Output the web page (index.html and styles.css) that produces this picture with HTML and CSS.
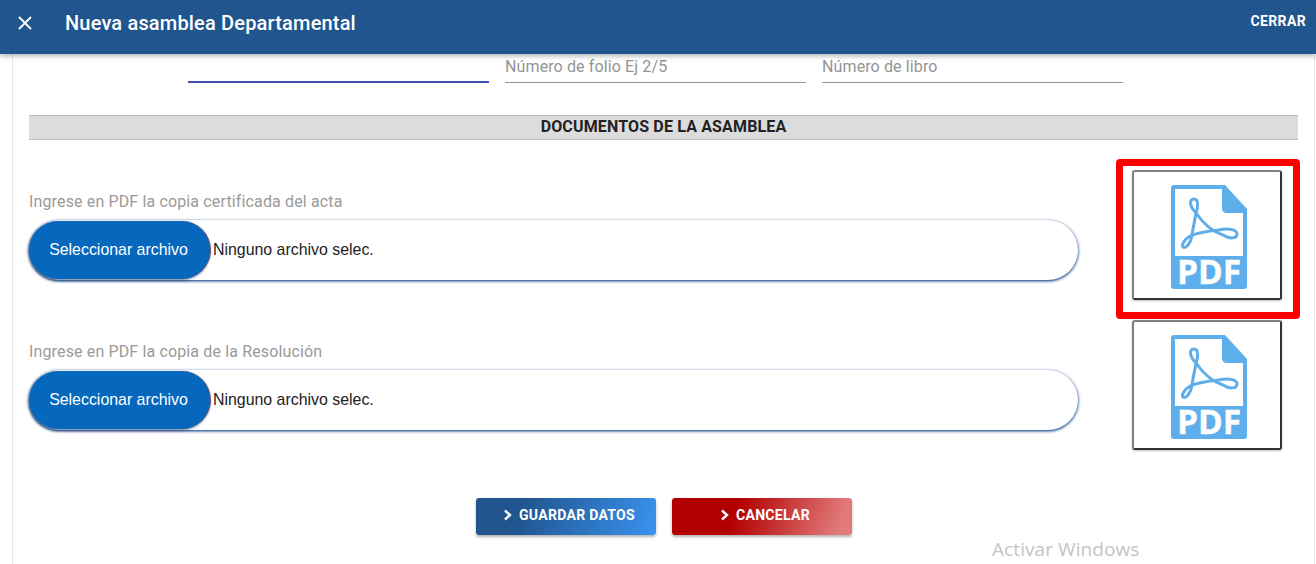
FILE: index.html
```html
<!DOCTYPE html>
<html lang="es">
<head>
<meta charset="utf-8">
<title>Nueva asamblea Departamental</title>
<link rel="stylesheet" href="styles.css">
</head>
<body>
<svg class="sprite" width="0" height="0" aria-hidden="true">
  <symbol id="pdf" viewBox="0 0 76 104">
    <path class="pdf-body" d="M3 0H54L76 24V101Q76 104 73 104H3Q0 104 0 101V3Q0 0 3 0Z"/>
    <path class="pdf-page" d="M4 4H51V23Q51 28 56 28H72V71H4Z"/>
    <path class="pdf-swoosh" d="M25 28C27 23 28 14 23 14C18 14 18 21 25 28C32 38 42 47 52 50C58 54 66 54 66 49C66 44 56 43 48 45C38 46 28 47 19 51C14 54 10 60 12 62C15 64 20 58 21 50C22 42 24 35 25 28Z"/>
  </symbol>
</svg>
<header class="bar">
  <svg class="close" viewBox="0 0 14 14" aria-hidden="true"><path d="M1 1L13 13M13 1L1 13"/></svg>
  <h1 class="bar-title">Nueva asamblea Departamental</h1>
  <span class="bar-action">CERRAR</span>
</header>
<main class="panel">
  <div class="fields">
    <div class="field field-active"></div>
    <div class="field">Número de folio Ej 2/5</div>
    <div class="field">Número de libro</div>
  </div>
  <h2 class="section">DOCUMENTOS DE LA ASAMBLEA</h2>
  <div class="docs">
    <div class="doc">
      <div class="doc-input">
        <label class="doc-label">Ingrese en PDF la copia certificada del acta</label>
        <div class="file"><span class="file-btn">Seleccionar archivo</span><span class="file-name">Ninguno archivo selec.</span></div>
      </div>
      <div class="preview-wrap">
        <div class="preview"><svg class="pdf-icon" viewBox="0 0 76 104"><use href="#pdf"/><text class="pdf-label" x="38" y="99" text-anchor="middle">PDF</text></svg></div>
        <div class="highlight"></div>
      </div>
    </div>
    <div class="doc">
      <div class="doc-input">
        <label class="doc-label">Ingrese en PDF la copia de la Resolución</label>
        <div class="file"><span class="file-btn">Seleccionar archivo</span><span class="file-name">Ninguno archivo selec.</span></div>
      </div>
      <div class="preview-wrap">
        <div class="preview"><svg class="pdf-icon" viewBox="0 0 76 104"><use href="#pdf"/><text class="pdf-label" x="38" y="99" text-anchor="middle">PDF</text></svg></div>
      </div>
    </div>
  </div>
  <div class="actions">
    <button class="btn btn-save"><svg class="chev" viewBox="0 0 9 12" aria-hidden="true"><path d="M2 1.5L7 6L2 10.5"/></svg>GUARDAR DATOS</button>
    <button class="btn btn-cancel"><svg class="chev" viewBox="0 0 9 12" aria-hidden="true"><path d="M2 1.5L7 6L2 10.5"/></svg>CANCELAR</button>
  </div>
</main>
<div class="watermark">Activar Windows</div>
</body>
</html>
```
FILE: styles.css
```css
* { box-sizing: border-box; }
html, body { margin: 0; height: 564px; overflow: hidden; background: #fff; }
body { font-family: Roboto, "Liberation Sans", sans-serif; position: relative; }
.sprite { position: absolute; }

.bar {
  height: 54px;
  background: #20558e;
  color: #fff;
  display: flex;
  align-items: flex-start;
  position: relative;
  z-index: 2;
  box-shadow: 0 2px 5px rgba(0,0,0,.3);
}
.close { width: 14px; height: 14px; margin: 16px 0 0 18px; fill: none; stroke: #fff; stroke-width: 1.8; }
.bar-title { margin: 11px 0 0 33px; font-size: 20px; line-height: 24px; font-weight: 500; letter-spacing: .17px; flex: 1; }
.bar-action { margin: 13px 10px 0 0; font-size: 14px; line-height: 16px; font-weight: 700; letter-spacing: .35px; }

.panel {
  margin: 0 1px 0 12px;
  height: 510px;
  border-left: 1px solid #e6e6e6;
  border-right: 1px solid #e6e6e6;
  padding: 0 16px;
}
.fields { display: flex; gap: 16px; padding: 0 0 0 159px; height: 29px; }
.field {
  width: 301px;
  height: 29px;
  border-bottom: 1px solid #949494;
  color: #949494;
  font-size: 16px;
  letter-spacing: .12px;
  line-height: 25px;
}
.field-active { border-bottom: 2px solid #3f51b5; }

.section {
  margin: 32px 0 0;
  height: 25px;
  background: #dcdcdc;
  border-top: 1px solid #bbb;
  border-bottom: 1px solid #bbb;
  font-size: 16px;
  letter-spacing: .15px;
  line-height: 21px;
  font-weight: 700;
  color: #222;
  text-align: center;
}

.docs { display: flex; flex-direction: column; gap: 20px; margin-top: 30px; }
.doc { display: flex; height: 130px; gap: 54px; }
.doc-input { width: 1049px; padding-top: 22px; }
.doc-label { display: block; color: #9a9a9a; font-size: 16px; letter-spacing: .14px; line-height: 20px; height: 28px; }
.file {
  height: 60px;
  padding: 1px 0;
  border-radius: 30px;
  background: #fff;
  display: flex;
  align-items: center;
  box-shadow: 0 2px 3px -1px #1f4f8f, 0 0 2px rgba(60,100,165,.55), 1px 1px 3px rgba(50,90,150,.5);
  font-family: "Liberation Sans", Arial, sans-serif;
  font-size: 15.9px;
}
.file-btn {
  width: 182px;
  height: 58px;
  border-radius: 29px;
  background: #0568bd;
  color: #fff;
  display: flex;
  align-items: center;
  justify-content: center;
  padding-right: 2px;
  border-right: 1px solid #7a4a5e;
  box-shadow: -1px 1px 3px rgba(20,50,100,.7);
}
.file-name { margin-left: 2px; color: #222; }

.preview-wrap { position: relative; width: 150px; height: 130px; }
.preview {
  width: 150px;
  height: 130px;
  border: 2px solid;
  border-color: #808080 #333 #333 #808080;
  border-radius: 3px;
  background: #fff;
  display: flex;
  justify-content: center;
  padding-top: 13px;
  box-shadow: 0 1px 2px rgba(0,0,0,.25);
}
.pdf-icon { width: 76px; height: 104px; margin-left: 4px; overflow: visible; }
.pdf-body { fill: #5daeeb; }
.pdf-page { fill: #fff; }
.pdf-swoosh { fill: none; stroke: #5daeeb; stroke-width: 3; }
.pdf-label { fill: #fff; stroke: #fff; stroke-width: .4; font-family: "Open Sans", sans-serif; font-size: 33.5px; font-weight: 700; }
.highlight {
  position: absolute;
  left: -16px;
  top: -11px;
  width: 184px;
  height: 160px;
  border: 7px solid #f00;
  border-radius: 4px;
}

.actions { display: flex; justify-content: center; gap: 16px; margin-top: 48px; padding-left: 1px; }
.btn {
  width: 180px;
  height: 37px;
  border: 0;
  border-radius: 3px;
  color: #fff;
  font-family: Roboto, sans-serif;
  font-size: 14px;
  font-weight: 700;
  letter-spacing: .3px;
  display: flex;
  align-items: center;
  justify-content: center;
  gap: 7px;
  padding: 0 0 3px 6px;
  box-shadow: 0 2px 3px rgba(0,0,0,.3);
}
.btn-save { background: linear-gradient(110deg, #20558e 25%, #3a93f0 100%); }
.btn-cancel { background: linear-gradient(110deg, #b20000 35%, #e27a7a 92%); }
.chev { width: 9px; height: 12px; fill: none; stroke: #fff; stroke-width: 2.4; }

.watermark {
  position: absolute;
  left: 992px;
  top: 537px;
  font-family: "Open Sans", sans-serif;
  font-size: 19px;
  letter-spacing: .08px;
  line-height: 24px;
  color: #c4c4c4;
}
```
